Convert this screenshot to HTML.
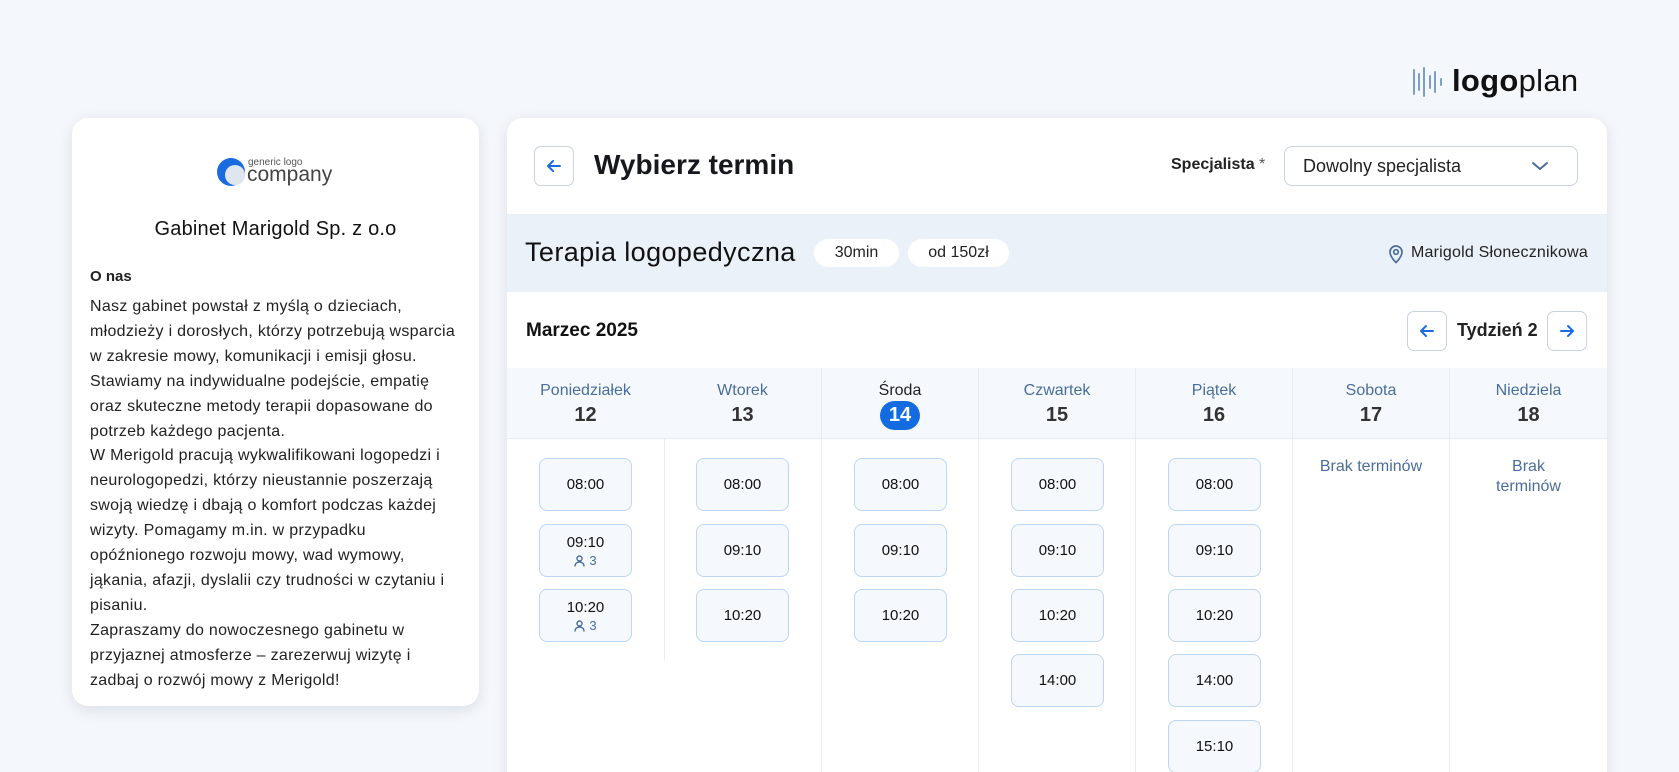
<!DOCTYPE html>
<html style="height:772px;overflow:hidden"><head><meta charset="utf-8"><style>
*{box-sizing:border-box;margin:0;padding:0}
body{width:1679px;height:772px;overflow:hidden;background:#f4f7fb;font-family:"Liberation Sans",sans-serif;color:#16181d;position:relative}
.abs{position:absolute}
.card{position:absolute;background:#fff;border-radius:16px;box-shadow:0 4px 14px rgba(40,60,90,.12)}
.btn{position:absolute;width:40px;height:40px;border:1px solid #c9d2dd;border-radius:7px;background:#fff;display:flex;align-items:center;justify-content:center}
.pill{position:absolute;top:239px;height:28px;background:#fff;border-radius:14px;font-size:16px;display:flex;align-items:center;justify-content:center;color:#222}
.col{position:absolute;top:368px;width:157px;height:410px;border-left:1px solid #e6edf5}
.hd{height:71px;background:#f5f9fd;border-bottom:1px solid #e6edf5;text-align:center}
.dn{font-size:16px;color:#4a6d9a;padding-top:14px;height:36px}
.dd{font-size:20px;font-weight:bold;color:#333}
.today{display:inline-block;background:#126ce0;color:#fff;border-radius:15px;width:40px;height:29px;line-height:29px;margin-top:-4px}
.slot{position:absolute;left:32px;width:93px;height:53px;background:#f5f9fd;border:1px solid #bcd6f3;border-radius:8px;font-size:15px;text-align:center;color:#111}
.slot .t{line-height:51px}
.slot .t2{padding-top:9px;line-height:18px}
.slot .p{font-size:13px;color:#4a6d9a;line-height:18px;display:flex;align-items:center;justify-content:center;gap:4px}
.brak{text-align:center;color:#4a6d9a;font-size:16px;padding-top:18px;line-height:20px}
</style></head><body>

<svg class="abs" style="left:1412px;top:66px" width="32" height="32" viewBox="0 0 32 32" stroke="#7d9dc5" stroke-width="2" stroke-linecap="round">
<line x1="2" y1="4" x2="2" y2="28"/><line x1="7" y1="8" x2="7" y2="24"/><line x1="12" y1="2" x2="12" y2="30"/><line x1="18" y1="10" x2="18" y2="22"/><line x1="23" y1="6" x2="23" y2="26"/><line x1="29" y1="13" x2="29" y2="19"/>
</svg>
<div class="abs" style="left:1452px;top:63px;font-size:31px;line-height:36px;color:#111;letter-spacing:0.3px"><b>logo</b>plan</div>

<div class="card" style="left:72px;top:118px;width:407px;height:588px"></div>
<svg class="abs" style="left:216px;top:156px" width="32" height="32" viewBox="0 0 32 32"><circle cx="15" cy="16" r="14" fill="#1a6be0"/><circle cx="19" cy="19" r="10" fill="#dfe6ef"/></svg>
<div class="abs" style="left:248px;top:157px;font-size:10px;color:#555;line-height:11px">generic logo</div>
<div class="abs" style="left:247px;top:163px;font-size:21px;color:#444;line-height:24px">company</div>
<div class="abs" style="left:72px;top:218px;width:407px;text-align:center;font-size:20px;color:#111;letter-spacing:0.2px">Gabinet Marigold Sp. z o.o</div>
<div class="abs" style="left:90px;top:268px;font-size:15px;font-weight:bold;color:#222">O nas</div>
<div class="abs" style="left:90px;top:295px;font-size:16px;line-height:24.9px;color:#222;white-space:nowrap;letter-spacing:0.3px">Nasz gabinet powstał z myślą o dzieciach,<br>młodzieży i dorosłych, którzy potrzebują wsparcia<br>w zakresie mowy, komunikacji i emisji głosu.<br>Stawiamy na indywidualne podejście, empatię<br>oraz skuteczne metody terapii dopasowane do<br>potrzeb każdego pacjenta.<br>W Merigold pracują wykwalifikowani logopedzi i<br>neurologopedzi, którzy nieustannie poszerzają<br>swoją wiedzę i dbają o komfort podczas każdej<br>wizyty. Pomagamy m.in. w przypadku<br>opóźnionego rozwoju mowy, wad wymowy,<br>jąkania, afazji, dyslalii czy trudności w czytaniu i<br>pisaniu.<br>Zapraszamy do nowoczesnego gabinetu w<br>przyjaznej atmosferze – zarezerwuj wizytę i<br>zadbaj o rozwój mowy z Merigold!</div>

<div class="card" style="left:507px;top:118px;width:1100px;height:680px"></div>
<div class="btn" style="left:534px;top:146px"><svg width="18" height="18" viewBox="0 0 18 18" fill="none" stroke="#1a6be0" stroke-width="2" stroke-linecap="round" stroke-linejoin="round"><path d="M15 9H3M8 4L3 9l5 5"/></svg></div>
<div class="abs" style="left:594px;top:148px;font-size:28px;font-weight:bold;line-height:34px;color:#16181d">Wybierz termin</div>
<div class="abs" style="left:1171px;top:156px;font-size:16px;font-weight:bold;color:#222">Specjalista <span style="font-weight:normal;color:#555">*</span></div>
<div class="abs" style="left:1284px;top:146px;width:294px;height:40px;border:1px solid #c9d2dd;border-radius:8px;font-size:18px;line-height:38px;padding-left:18px;color:#222">Dowolny specjalista
<svg class="abs" style="right:28px;top:13px" width="18" height="12" viewBox="0 0 18 12" fill="none" stroke="#4a6d9a" stroke-width="2" stroke-linecap="round" stroke-linejoin="round"><path d="M2 3l7 6 7-6"/></svg></div>

<div class="abs" style="left:507px;top:214px;width:1100px;height:78px;background:#ebf1f8"></div>
<div class="abs" style="left:525px;top:235px;font-size:27px;line-height:34px;color:#111;letter-spacing:0.4px">Terapia logopedyczna</div>
<div class="pill" style="left:814px;width:85px">30min</div>
<div class="pill" style="left:908px;width:101px">od 150zł</div>
<svg class="abs" style="left:1387px;top:244px" width="18" height="20" viewBox="0 0 18 20" fill="none" stroke="#4a6d9a" stroke-width="1.7"><path d="M9 18.5s6-5.5 6-10.5a6 6 0 0 0-12 0c0 5 6 10.5 6 10.5z"/><circle cx="9" cy="8" r="2.3"/></svg>
<div class="abs" style="left:1411px;top:244px;font-size:16px;color:#222;letter-spacing:0.2px">Marigold Słonecznikowa</div>

<div class="abs" style="left:526px;top:320px;font-size:19px;font-weight:bold;color:#111">Marzec 2025</div>
<div class="btn" style="left:1407px;top:311px"><svg width="18" height="18" viewBox="0 0 18 18" fill="none" stroke="#1a6be0" stroke-width="2" stroke-linecap="round" stroke-linejoin="round"><path d="M15 9H3M8 4L3 9l5 5"/></svg></div>
<div class="abs" style="left:1457px;top:320px;font-size:18px;font-weight:bold;color:#222">Tydzień 2</div>
<div class="btn" style="left:1547px;top:311px"><svg width="18" height="18" viewBox="0 0 18 18" fill="none" stroke="#1a6be0" stroke-width="2" stroke-linecap="round" stroke-linejoin="round"><path d="M3 9h12M10 4l5 5-5 5"/></svg></div>
<div class="abs" style="left:507px;top:368px;width:1100px;height:1px;background:#e6edf5"></div>

<div class="col" style="left:507px;border-left:none;height:71px"><div class="hd"><div class="dn">Poniedziałek</div><div class="dd">12</div></div>
<div class="slot" style="top:90px"><div class="t">08:00</div></div>
<div class="slot" style="top:156px"><div class="t2">09:10</div><div class="p"><svg width="11" height="12" viewBox="0 0 11 12" fill="none" stroke="#4a6d9a" stroke-width="1.4"><circle cx="5.5" cy="3.5" r="2.5"/><path d="M1 11.5c0-3 2-4.5 4.5-4.5s4.5 1.5 4.5 4.5"/></svg>3</div></div>
<div class="slot" style="top:221px"><div class="t2">10:20</div><div class="p"><svg width="11" height="12" viewBox="0 0 11 12" fill="none" stroke="#4a6d9a" stroke-width="1.4"><circle cx="5.5" cy="3.5" r="2.5"/><path d="M1 11.5c0-3 2-4.5 4.5-4.5s4.5 1.5 4.5 4.5"/></svg>3</div></div>
</div>
<div class="abs" style="left:664px;top:368px;width:1px;height:293px;background:#e6edf5"></div>
<div class="col" style="left:664px;border-left:none"><div class="hd"><div class="dn">Wtorek</div><div class="dd">13</div></div>
<div class="slot" style="top:90px"><div class="t">08:00</div></div>
<div class="slot" style="top:156px"><div class="t">09:10</div></div>
<div class="slot" style="top:221px"><div class="t">10:20</div></div>
</div>
<div class="col" style="left:821px"><div class="hd"><div class="dn" style="color:#222">Środa</div><div class="dd"><span class="today">14</span></div></div>
<div class="slot" style="top:90px"><div class="t">08:00</div></div>
<div class="slot" style="top:156px"><div class="t">09:10</div></div>
<div class="slot" style="top:221px"><div class="t">10:20</div></div>
</div>
<div class="col" style="left:978px"><div class="hd"><div class="dn">Czwartek</div><div class="dd">15</div></div>
<div class="slot" style="top:90px"><div class="t">08:00</div></div>
<div class="slot" style="top:156px"><div class="t">09:10</div></div>
<div class="slot" style="top:221px"><div class="t">10:20</div></div>
<div class="slot" style="top:286px"><div class="t">14:00</div></div>
</div>
<div class="col" style="left:1135px"><div class="hd"><div class="dn">Piątek</div><div class="dd">16</div></div>
<div class="slot" style="top:90px"><div class="t">08:00</div></div>
<div class="slot" style="top:156px"><div class="t">09:10</div></div>
<div class="slot" style="top:221px"><div class="t">10:20</div></div>
<div class="slot" style="top:286px"><div class="t">14:00</div></div>
<div class="slot" style="top:352px"><div class="t">15:10</div></div>
</div>
<div class="col" style="left:1292px"><div class="hd"><div class="dn">Sobota</div><div class="dd">17</div></div>
<div class="brak">Brak terminów</div></div>
<div class="col" style="left:1449px;width:158px"><div class="hd"><div class="dn">Niedziela</div><div class="dd">18</div></div>
<div class="brak">Brak<br>terminów</div></div>

</body></html>
